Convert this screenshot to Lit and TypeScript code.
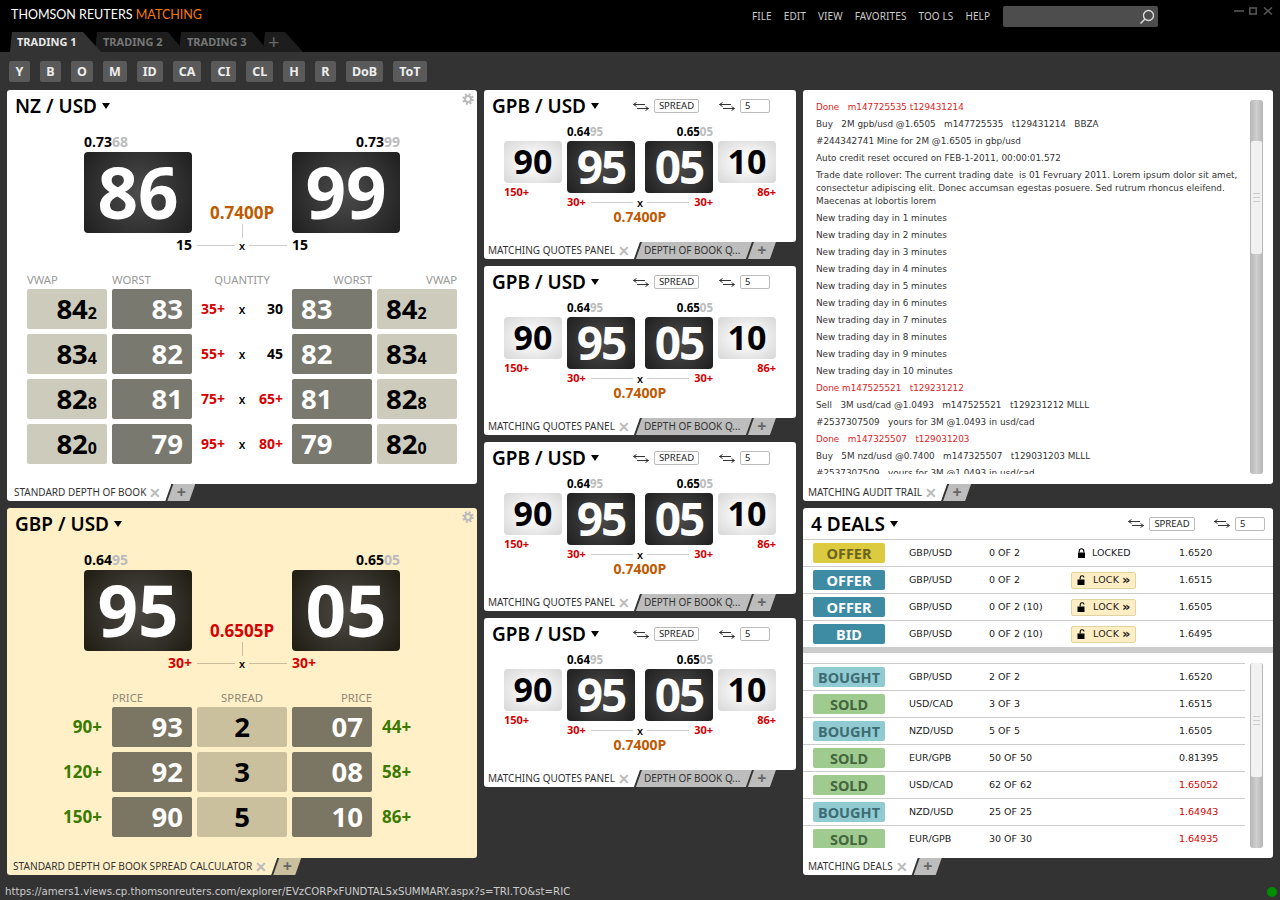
import { LitElement, html, css } from "lit";
import { customElement } from "lit/decorators.js";

const arrows = html`<svg class="arr" viewBox="0 0 18 11" width="18" height="11"><path d="M13 3.5H1.5M4.5 1.5L1.5 3.5L4.5 5.5M5 7.5H16.5M13.5 5.5L16.5 7.5L13.5 9.5" fill="none" stroke="#333" stroke-width="1"/></svg>`;
const caret = html`<svg class="caret" viewBox="0 0 8 6" width="8" height="6"><path d="M0 0H8L4 6Z" fill="#000"/></svg>`;
const gear = html`<svg class="gear" viewBox="0 0 12 12" width="12" height="12"><circle cx="6" cy="6" r="3" fill="none" stroke="#bbb" stroke-width="2.2"/><circle cx="6" cy="6" r="4.8" fill="none" stroke="#bbb" stroke-width="2" stroke-dasharray="2 1.77"/></svg>`;
const lockClosed = html`<svg viewBox="0 0 9 10" width="9" height="10"><path d="M2.2 4.5V3a2.3 2.3 0 0 1 4.6 0V4.5" fill="none" stroke="#000" stroke-width="1.1"/><rect x="1" y="4.5" width="7" height="5.5" fill="#000"/></svg>`;
const lockOpen = html`<svg viewBox="0 0 9 10" width="9" height="10"><path d="M3.2 4.5V2.6a1.9 1.9 0 0 1 3.8 0" fill="none" stroke="#000" stroke-width="1.1"/><rect x=".5" y="4.5" width="7" height="5.5" fill="#000"/></svg>`;

type Quote = { a: string; b: string };

@customElement("app-root")
export class AppRoot extends LitElement {
  static styles = css`
    :host { display: block; width: 1280px; height: 900px; overflow: hidden; background: #333; font-family: "Noto Sans", sans-serif; color: #222; }
    .app { display: flex; flex-direction: column; height: 900px; }
    .head { background: #000; height: 52px; display: flex; flex-direction: column; flex: none; }
    .top { height: 32px; display: flex; align-items: flex-start; }
    .brand { font: 12.5px/30px Lato, sans-serif; color: #fff; margin-left: 11px; width: 741px; white-space: nowrap; }
    .brand b { font-weight: 400; color: #f57c00; }
    .menu { display: flex; gap: 12px; font: 10px/33px "Noto Sans", sans-serif; letter-spacing: .1px; color: #ccc; width: 251px; white-space: nowrap; }
    .search { width: 155px; height: 21px; margin-top: 6px; background: #4d4d4d; border-radius: 2px; display: flex; align-items: center; justify-content: flex-end; padding-right: 3px; box-sizing: border-box; }
    .winbtns { margin: 7px 0 0 76px; display: flex; }
    .tabsTop { display: flex; height: 20px; padding-left: 10px; }
    .tt { font: 700 11px/20px "Noto Sans", sans-serif; color: #777; background: #1d1d1d; width: 90px; margin-right: -6px; padding-left: 8px; box-sizing: border-box; clip-path: polygon(2px 0, 73px 0, 100% 100%, 0 100%); white-space: nowrap; }
    .tt.on { background: #333; color: #e8e8e8; padding-left: 7px; z-index: 2; width: 91px; }
    .tt.plus { width: 40px; color: #666; font-size: 20px; font-weight: 400; line-height: 19px; padding-left: 5px; clip-path: polygon(2px 0, 22px 0, 100% 100%, 0 100%); }
    .tools { height: 38px; flex: none; display: flex; gap: 10px; padding: 9px 0 0 9px; box-sizing: border-box; }
    .tool { height: 21px; background: #5a5a5a; color: #eee; font: 700 12.5px/21px "Noto Sans", sans-serif; border-radius: 2px; padding: 0 6px; min-width: 9px; text-align: center; }
    .main { flex: 1; display: flex; gap: 7px; padding: 0 7px; min-height: 0; }
    .col { display: flex; flex-direction: column; gap: 7px; }
    .c1, .c3 { width: 470px; }
    .c2 { width: 312px; }
    .status { height: 17px; flex: none; display: flex; align-items: center; justify-content: space-between; padding: 0 3px 0 5px; font: 10.2px/17px "DejaVu Sans", sans-serif; color: #ccc; }
    .dot { width: 10px; height: 10px; border-radius: 50%; background: #008f00; }
    .panel { display: flex; flex-direction: column; }
    .body { background: #fff; border-radius: 3px 3px 3px 0; position: relative; overflow: hidden; }
    .h394 { height: 394px; } .h350 { height: 350px; } .h152 { height: 152px; }
    .yellow .body { background: #fff0c8; }
    .strip { display: flex; height: 17px; font: 10px/17px "Noto Sans", sans-serif; color: #333; }
    .t { white-space: nowrap; box-sizing: border-box; }
    .t.on { background: #fff; display: flex; align-items: center; padding-left: 7px; padding-right: 10px; clip-path: polygon(0 0, 100% 0, calc(100% - 6px) 100%, 0 100%); border-radius: 0 0 0 3px; }
    .c2 .t.on, .c3 .t.on { padding-left: 5px; }
    .c2 .t.on { padding-left: 4px; }
    .yellow .t.on { background: #fff0c8; padding-left: 6px; font-size: 10.15px; }
    .x { color: #bbb; margin-left: 3px; font-size: 14px; line-height: 17px; font-weight: 700; }
    .t.off { background: #bdbdbd; padding: 0 6px 0 8px; margin-left: -4px; width: 116px; clip-path: polygon(6px 0, 100% 0, calc(100% - 6px) 100%, 0 100%); }
    .t.add { background: #bdbdbd; color: #666; width: 28px; margin-left: -4px; text-align: center; font-size: 16px; font-weight: 700; clip-path: polygon(6px 0, 100% 0, calc(100% - 6px) 100%, 0 100%); }
    .yellow .t.add { background: #cbc09e; }
    .ph { height: 32px; display: flex; align-items: center; padding-left: 8px; }
    .title { font: 600 19px/34px "Noto Sans", sans-serif; color: #000; display: flex; align-items: center; white-space: pre; }
    .gear { position: absolute; top: 3px; right: 3px; }
    .q { display: grid; grid-template-columns: 108px 100px 108px; justify-content: center; margin-top: 12px; }
    .rate { font: 700 14px/16px "Open Sans", sans-serif; color: #000; height: 18px; }
    .rate i { font-style: normal; color: #bbb; }
    .r { text-align: right; }
    .tile { background: radial-gradient(circle at center, #4c4c4c 0, #333 55%, #1f1f1f 100%); border-radius: 4px; color: #fff; font-family: "Open Sans", sans-serif; font-weight: 700; text-align: center; }
    .big { height: 81px; font-size: 71px; line-height: 80px; }
    .yellow .tile { background: radial-gradient(circle at center, #4c4a42 0, #33312a 55%, #1f1c10 100%); }
    .mid { grid-row: 2 / 4; grid-column: 2; display: flex; flex-direction: column; align-items: center; justify-content: flex-end; }
    .price { font: 700 17px/22px "Open Sans", sans-serif; color: #c05a00; }
    .price.red { color: #d50000; }
    .v { width: 1px; height: 14px; background: #ccc; }
    .yellow .v, .yellow .ln { background: #c8bd9c; }
    .xrow { display: flex; align-items: center; width: 100%; box-sizing: border-box; padding: 0 5px; height: 15px; }
    .ln { flex: 1; height: 1px; background: #ccc; }
    .xx { font: 600 11px/15px "Open Sans", sans-serif; padding: 0 4px; color: #000; }
    .qty { font: 700 14px/16px "Open Sans", sans-serif; color: #000; padding-top: 4px; height: 16px; }
    .red { color: #d50000; }
    .thead { display: flex; gap: 5px; margin: 20px 0 3px 20px; font: 11.3px/13px "Noto Sans", sans-serif; color: #999; }
    .yellow .thead { color: #8f8875; }
    .cw { width: 80px; } .mw { width: 90px; text-align: center; }
    .rows { display: flex; flex-direction: column; gap: 5px; margin-left: 20px; }
    .row { display: flex; gap: 5px; }
    .cell { width: 80px; height: 40px; border-radius: 2px; font: 700 27.5px/40px "Open Sans", sans-serif; box-sizing: border-box; white-space: nowrap; }
    .cell.vw { background: #cdcbbc; color: #000; text-align: right; padding-right: 10px; }
    .cell.vw.rv { text-align: left; padding: 0 0 0 9px; }
    .cell.vw small { font-size: 16px; font-weight: 700; }
    .cell.dk { background: #797970; color: #fff; text-align: right; padding-right: 9px; }
    .cell.dk.rv { text-align: left; padding: 0 0 0 9px; }
    .yellow .cell.dk { background: #7b7563; }
    .cell.sp { width: 90px; background: #cbc09e; color: #000; text-align: center; }
    .mq { width: 90px; display: grid; grid-template-columns: 1fr auto 1fr; align-items: center; font: 700 14px/40px "Open Sans", sans-serif; color: #000; padding: 0 4px; box-sizing: border-box; }
    .mq .xx { padding: 0 9px; font-size: 12px; }
    .mq .e { text-align: right; }
    .gl { width: 80px; box-sizing: border-box; font: 700 17px/40px "Open Sans", sans-serif; color: #3b7a00; text-align: right; padding-right: 5px; }
    .gl.rv { text-align: left; padding: 0 0 0 5px; }
    .ctrl { display: flex; align-items: center; gap: 4px; }
    .box { border: 1px solid #bbb; border-radius: 2px; height: 14px; box-sizing: border-box; font: 9.5px/12px "Noto Sans", sans-serif; color: #222; background: #fff; }
    .sb { width: 45px; text-align: center; margin-right: 19px; }
    .nb { width: 30px; padding-left: 4px; }
    .ttl2 { width: 140px; }
    .sq { display: grid; margin: 3px 0 0 20px; grid-template-rows: 16px 52px 16px 16px; width: 272px; grid-template-columns: 58px 5px 68px 10px 68px 5px 58px; }
    .srate { font: 700 11.5px/14px "Open Sans", sans-serif; color: #000; grid-row: 1; }
    .srate i { font-style: normal; color: #bbb; }
    .c3col { grid-column: 3; } .c5col { grid-column: 5; } .c1col { grid-column: 1; } .c7col { grid-column: 7; }
    .side { grid-row: 2 / 4; display: flex; flex-direction: column; }
    .stile { height: 42px; font: 700 34px/41px "Open Sans", sans-serif; color: #000; text-align: center; border-radius: 4px; background: radial-gradient(ellipse at center, #f7f7f7 30%, #d6d6d6 100%); }
    .sl { font: 700 11px/14px "Open Sans", sans-serif; margin-top: 2px; color: #d50000; }
    .tm { height: 52px; font-size: 46px; line-height: 51px; letter-spacing: -2px; grid-row: 2; }
    .sx { grid-row: 3; grid-column: 3 / 6; display: flex; align-items: center; font: 700 11px/14px "Open Sans", sans-serif; margin-top: 2px; height: 14px; }
    .sx .red { width: 24px; } .sx .e { text-align: right; }
    .sp2 { grid-row: 4; grid-column: 3 / 6; text-align: center; font: 700 14px/16px "Open Sans", sans-serif; color: #c05a00; }
    .audit { display: flex; margin-top: 10px; padding: 0 10px 0 13px; height: 374px; box-sizing: border-box; }
    .log { flex: 1; overflow: hidden; font: 8.85px/13px "DejaVu Sans", sans-serif; color: #333; padding: 1px 10px 0 0; min-width: 0; }
    .log p { margin: 0 0 4px; white-space: pre-wrap; }
    .log p.d { color: #e01b24; }
    .scroll { width: 13px; flex: none; border-radius: 3px; background: linear-gradient(90deg, #b5b5b5, #cfcfcf 50%, #b5b5b5); display: flex; flex-direction: column; align-items: center; }
    .thumb { width: 11px; background: #f1f1f1; border-radius: 2px; display: flex; align-items: center; justify-content: center; }
    .a1 { margin-top: 41px; height: 113px; }
    .grip { width: 7px; height: 9px; border-top: 1px solid #ccc; border-bottom: 1px solid #ccc; box-sizing: border-box; background: linear-gradient(#ccc, #ccc) center / 100% 1px no-repeat; }
    .dh { height: 32px; display: flex; align-items: center; padding: 0 8px; border-bottom: 1px solid #ccc; box-sizing: border-box; }
    .dh .title { flex: 1; }
    .dh .sb { width: 46px; margin-right: 18px; }
    .dr { display: grid; grid-template-columns: 106px 80px 82px 108px 1fr; align-items: center; height: 27px; border-bottom: 1px solid #ccc; box-sizing: border-box; font: 9.5px/12px "DejaVu Sans", sans-serif; color: #222; white-space: nowrap; }
    .badge { width: 72px; height: 20px; margin-left: 10px; border-radius: 2px; text-align: center; font: 700 14.5px/20px "Noto Sans", sans-serif; }
    .bo { background: #dccb3e; color: #6b6320; }
    .bt { background: #3e8ca3; color: #fff; }
    .bb { background: #90cbd2; color: #3f6b73; }
    .bs { background: #a0cb90; color: #44663c; }
    .lockbtn { width: 65px; height: 17px; background: #ffeec4; border: 1px solid #e3d3a3; border-radius: 2px; box-sizing: border-box; display: flex; align-items: center; padding-left: 5px; font-size: 9.5px; letter-spacing: .2px; }
    .lockbtn span { margin-left: 7px; }
    .lockbtn b { font-size: 13px; line-height: 12px; margin-left: 3px; }
    .locked { display: flex; align-items: center; gap: 6px; padding-left: 6px; }
    .sep { height: 5px; background: #ccc; }
    .lower { display: flex; margin-top: 10px; height: 185px; }
    .dl { width: 442px; overflow: hidden; border-top: 1px solid #ccc; box-sizing: border-box; }
    .scroll.s2 { margin-left: 5px; }
    .b1 { height: 114px; }
  `;

  private tabstrip(on: string, second?: string) {
    return html`<div class="strip">
      <div class="t on">${on}<span class="x">✕</span></div>
      ${second ? html`<div class="t off">${second}</div>` : ""}
      <div class="t add">+</div>
    </div>`;
  }

  private rateLbl(a: string, b: string, cls: string) {
    return html`<div class="rate ${cls}">${a}<i>${b}</i></div>`;
  }

  private bigQuote(rl: Quote, rr: Quote, t1: string, t2: string, price: string, red: boolean, q1: any, q2: any) {
    return html`<div class="q">
      ${this.rateLbl(rl.a, rl.b, "")}<div></div>${this.rateLbl(rr.a, rr.b, "r")}
      <div class="tile big">${t1}</div>
      <div class="mid">
        <div class="price ${red ? "red" : ""}">${price}</div>
        <div class="v"></div>
        <div class="xrow"><div class="ln"></div><span class="xx">x</span><div class="ln"></div></div>
      </div>
      <div class="tile big">${t2}</div>
      <div class="qty r">${q1}</div><div class="qty">${q2}</div>
    </div>`;
  }

  private smallPanel() {
    return html`<div class="panel">
      <div class="body h152">
        <div class="ph">
          <div class="title ttl2">GPB / USD ${caret}</div>
          <div class="ctrl">${arrows}<div class="box sb">SPREAD</div></div>
          <div class="ctrl">${arrows}<div class="box nb">5</div></div>
        </div>
        <div class="sq">
          <div class="srate c3col">0.64<i>95</i></div>
          <div class="srate c5col r">0.65<i>05</i></div>
          <div class="side c1col"><div class="stile">90</div><div class="sl">150+</div></div>
          <div class="tile tm c3col">95</div>
          <div class="tile tm c5col">05</div>
          <div class="side c7col"><div class="stile">10</div><div class="sl r">86+</div></div>
          <div class="sx"><span class="red">30+</span><div class="ln"></div><span class="xx">x</span><div class="ln"></div><span class="red e">30+</span></div>
          <div class="sp2">0.7400P</div>
        </div>
      </div>
      ${this.tabstrip("MATCHING QUOTES PANEL", "DEPTH OF BOOK Q...")}
    </div>`;
  }

  private dealRow(cls: string, label: string, pair: string, size: string, lock: any, price: string, red = false) {
    return html`<div class="dr">
      <div class="badge ${cls}">${label}</div>
      <div>${pair}</div><div>${size}</div><div>${lock}</div>
      <div class="${red ? "red" : ""}">${price}</div>
    </div>`;
  }

  render() {
    const tools = ["Y", "B", "O", "M", "ID", "CA", "CI", "CL", "H", "R", "DoB", "ToT"];
    const book = [
      ["84", "2", "83", "35+", "30", false],
      ["83", "4", "82", "55+", "45", false],
      ["82", "8", "81", "75+", "65+", true],
      ["82", "0", "79", "95+", "80+", true],
    ] as const;
    const spread = [
      ["90+", "93", "2", "07", "44+"],
      ["120+", "92", "3", "08", "58+"],
      ["150+", "90", "5", "10", "86+"],
    ];
    const log: [string, boolean][] = [
      ["Done   m147725535 t129431214", true],
      ["Buy   2M gpb/usd @1.6505   m147725535   t129431214   BBZA", false],
      ["#244342741 Mine for 2M @1.6505 in gbp/usd", false],
      ["Auto credit reset occured on FEB-1-2011, 00:00:01.572", false],
      ["Trade date rollover: The current trading date  is 01 Fevruary 2011. Lorem ipsum dolor sit amet, consectetur adipiscing elit. Donec accumsan egestas posuere. Sed rutrum rhoncus eleifend. Maecenas at lobortis lorem", false],
      ...[1, 2, 3, 4, 5, 6, 7, 8, 9, 10].map((n) => [`New trading day in ${n} minutes`, false] as [string, boolean]),
      ["Done m147525521   t129231212", true],
      ["Sell   3M usd/cad @1.0493   m147525521   t129231212 MLLL", false],
      ["#2537307509   yours for 3M @1.0493 in usd/cad", false],
      ["Done   m147325507   t129031203", true],
      ["Buy   5M nzd/usd @0.7400   m147325507   t129031203 MLLL", false],
      ["#2537307509   yours for 3M @1.0493 in usd/cad", false],
    ];
    const lk = html`<div class="lockbtn">${lockOpen}<span>LOCK</span><b>»</b></div>`;
    const grip = html`<div class="grip"></div>`;
    return html`<div class="app">
      <div class="head">
        <div class="top">
          <div class="brand">THOMSON REUTERS <b>MATCHING</b></div>
          <div class="menu"><span>FILE</span><span>EDIT</span><span>VIEW</span><span>FAVORITES</span><span>TOO LS</span><span>HELP</span></div>
          <div class="search"><svg viewBox="0 0 16 16" width="16" height="16"><circle cx="9.5" cy="6.5" r="5" fill="none" stroke="#ddd" stroke-width="1.3"/><path d="M6 10L1.5 14.5" stroke="#ddd" stroke-width="1.5"/></svg></div>
          <div class="winbtns"><svg viewBox="0 0 40 8" width="40" height="8"><path d="M0 4H10" stroke="#555" stroke-width="1.6"/><rect x="15.8" y="1" width="6.4" height="6" fill="none" stroke="#555" stroke-width="1.6"/><path d="M30 .5L38 7.5M38 .5L30 7.5" stroke="#555" stroke-width="1.6"/></svg></div>
        </div>
        <div class="tabsTop">
          <div class="tt on">TRADING 1</div><div class="tt">TRADING 2</div><div class="tt">TRADING 3</div><div class="tt plus">+</div>
        </div>
      </div>
      <div class="tools">${tools.map((t) => html`<div class="tool">${t}</div>`)}</div>
      <div class="main">
        <div class="col c1">
          <div class="panel">
            <div class="body h394">
              ${gear}
              <div class="ph"><div class="title">NZ / USD ${caret}</div></div>
              ${this.bigQuote({ a: "0.73", b: "68" }, { a: "0.73", b: "99" }, "86", "99", "0.7400P", false, "15", "15")}
              <div class="thead">
                <div class="cw">VWAP</div><div class="cw">WORST</div><div class="mw">QUANTITY</div><div class="cw r">WORST</div><div class="cw r">VWAP</div>
              </div>
              <div class="rows">
                ${book.map((b) => html`<div class="row">
                  <div class="cell vw">${b[0]}<small>${b[1]}</small></div>
                  <div class="cell dk">${b[2]}</div>
                  <div class="mq"><span class="red">${b[3]}</span><span class="xx">x</span><span class="e ${b[5] ? "red" : ""}">${b[4]}</span></div>
                  <div class="cell dk rv">${b[2]}</div>
                  <div class="cell vw rv">${b[0]}<small>${b[1]}</small></div>
                </div>`)}
              </div>
            </div>
            ${this.tabstrip("STANDARD DEPTH OF BOOK")}
          </div>
          <div class="panel yellow">
            <div class="body h350">
              ${gear}
              <div class="ph"><div class="title">GBP / USD ${caret}</div></div>
              ${this.bigQuote({ a: "0.64", b: "95" }, { a: "0.65", b: "05" }, "95", "05", "0.6505P", true, html`<span class="red">30+</span>`, html`<span class="red">30+</span>`)}
              <div class="thead">
                <div class="cw"></div><div class="cw">PRICE</div><div class="mw">SPREAD</div><div class="cw r">PRICE</div>
              </div>
              <div class="rows">
                ${spread.map((s) => html`<div class="row">
                  <div class="gl">${s[0]}</div>
                  <div class="cell dk">${s[1]}</div>
                  <div class="cell sp">${s[2]}</div>
                  <div class="cell dk">${s[3]}</div>
                  <div class="gl rv">${s[4]}</div>
                </div>`)}
              </div>
            </div>
            ${this.tabstrip("STANDARD DEPTH OF BOOK SPREAD CALCULATOR")}
          </div>
        </div>
        <div class="col c2">
          ${this.smallPanel()}${this.smallPanel()}${this.smallPanel()}${this.smallPanel()}
        </div>
        <div class="col c3">
          <div class="panel">
            <div class="body h394">
              <div class="audit">
                <div class="log">${log.map(([t, d]) => html`<p class="${d ? "d" : ""}">${t}</p>`)}</div>
                <div class="scroll"><div class="thumb a1">${grip}</div></div>
              </div>
            </div>
            ${this.tabstrip("MATCHING AUDIT TRAIL")}
          </div>
          <div class="panel">
            <div class="body h350">
              <div class="dh">
                <div class="title">4 DEALS ${caret}</div>
                <div class="ctrl">${arrows}<div class="box sb">SPREAD</div></div>
                <div class="ctrl">${arrows}<div class="box nb">5</div></div>
              </div>
              ${this.dealRow("bo", "OFFER", "GBP/USD", "0 OF 2", html`<div class="locked">${lockClosed}<span>LOCKED</span></div>`, "1.6520")}
              ${this.dealRow("bt", "OFFER", "GBP/USD", "0 OF 2", lk, "1.6515")}
              ${this.dealRow("bt", "OFFER", "GBP/USD", "0 OF 2 (10)", lk, "1.6505")}
              ${this.dealRow("bt", "BID", "GBP/USD", "0 OF 2 (10)", lk, "1.6495")}
              <div class="sep"></div>
              <div class="lower">
                <div class="dl">
                  ${this.dealRow("bb", "BOUGHT", "GBP/USD", "2 OF 2", "", "1.6520")}
                  ${this.dealRow("bs", "SOLD", "USD/CAD", "3 OF 3", "", "1.6515")}
                  ${this.dealRow("bb", "BOUGHT", "NZD/USD", "5 OF 5", "", "1.6505")}
                  ${this.dealRow("bs", "SOLD", "EUR/GPB", "50 OF 50", "", "0.81395")}
                  ${this.dealRow("bs", "SOLD", "USD/CAD", "62 OF 62", "", "1.65052", true)}
                  ${this.dealRow("bb", "BOUGHT", "NZD/USD", "25 OF 25", "", "1.64943", true)}
                  ${this.dealRow("bs", "SOLD", "EUR/GPB", "30 OF 30", "", "1.64935", true)}
                </div>
                <div class="scroll s2"><div class="thumb b1">${grip}</div></div>
              </div>
            </div>
            ${this.tabstrip("MATCHING DEALS")}
          </div>
        </div>
      </div>
      <div class="status"><span>https://amers1.views.cp.thomsonreuters.com/explorer/EVzCORPxFUNDTALSxSUMMARY.aspx?s=TRI.TO&st=RIC</span><div class="dot"></div></div>
    </div>`;
  }
}
